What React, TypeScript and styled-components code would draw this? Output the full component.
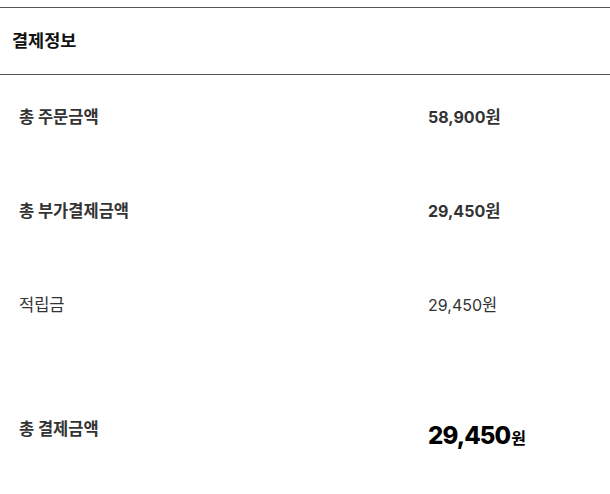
import React, { FC } from 'react';
import styled, { createGlobalStyle } from 'styled-components';

const GlobalStyle = createGlobalStyle`
	html, body {
		margin: 0;
		padding: 0;
		background: #fff;
	}
	body {
		font-family: 'Noto Sans CJK KR', 'Noto Sans', sans-serif;
		color: #333;
	}
`;

type Row = { label: string; value: string; strong?: boolean };

const rows: Row[] = [
	{ label: '총 주문금액', value: '58,900', strong: true },
	{ label: '총 부가결제금액', value: '29,450', strong: true },
	{ label: '적립금', value: '29,450' },
];

const App: FC = () => {
	return (
		<>
			<GlobalStyle />
			<Section>
				<Title>결제정보</Title>
				<List>
					{rows.map((row) => (
						<Item key={row.label}>
							<Label $strong={row.strong}>{row.label}</Label>
							<Value $strong={row.strong}>
								{row.value}
								<Won>원</Won>
							</Value>
						</Item>
					))}
					<Total>
						<Label $strong>총 결제금액</Label>
						<TotalValue>
							29,450<TotalWon>원</TotalWon>
						</TotalValue>
					</Total>
				</List>
			</Section>
		</>
	);
};

export default App;

const Section = styled.section`
	margin-top: 7px;
	border-top: 1px solid #555;
`;

const Title = styled.h2`
	margin: 0;
	height: 67px;
	padding: 0 12px 4px;
	display: flex;
	align-items: center;
	font-size: 17.5px;
	font-weight: 700;
	color: #111;
	border-bottom: 1px solid #555;
	box-sizing: border-box;
`;

const List = styled.div`
	padding: 29px 19px 0;
`;

const Item = styled.div`
	display: grid;
	grid-template-columns: 409px 1fr;
	align-items: start;
	height: 94px;
	line-height: 24px;
`;

const Label = styled.div<{ $strong?: boolean }>`
	font-size: 16.5px;
	line-height: 24px;
	font-weight: ${(p) => (p.$strong ? 700 : 400)};
	color: #333;
`;

const Value = styled.div<{ $strong?: boolean }>`
	font-family: Inter, 'Noto Sans CJK KR', sans-serif;
	font-size: 16px;
	line-height: 24px;
	font-weight: ${(p) => (p.$strong ? 700 : 400)};
	color: #333;
`;

const Won = styled.span`
	font-family: 'Noto Sans CJK KR', sans-serif;
	font-size: 16.5px;
`;

const Total = styled.div`
	display: grid;
	grid-template-columns: 409px 1fr;
	align-items: start;
	margin-top: 30px;
`;

const TotalValue = styled.div`
	font-family: Inter, 'Noto Sans CJK KR', sans-serif;
	font-size: 24px;
	line-height: 24px;
	margin-top: 8px;
	font-weight: 800;
	letter-spacing: -0.9px;
	color: #000;
`;

const TotalWon = styled.span`
	font-family: 'Noto Sans CJK KR', sans-serif;
	font-size: 16px;
	font-weight: 700;
	letter-spacing: 0;
	margin-left: 1px;
`;
